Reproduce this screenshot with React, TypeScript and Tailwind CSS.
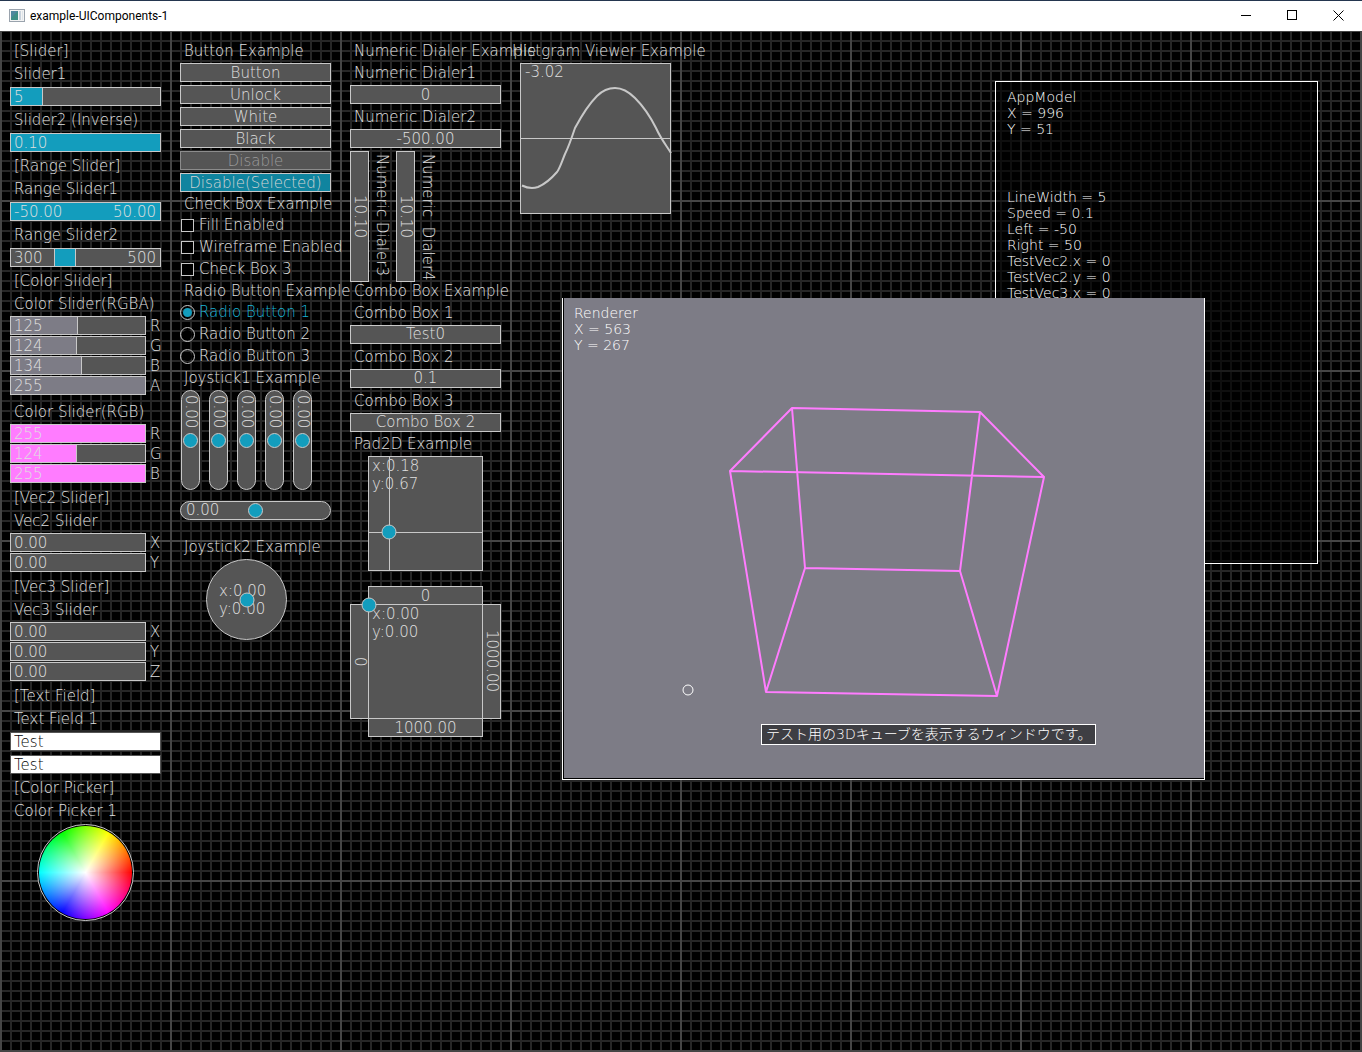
import React, { useId, useState } from "react";
import clsx from "clsx";

const RANGE_BASE =
  "block appearance-none bg-transparent outline-none cursor-pointer [&::-webkit-slider-thumb]:appearance-none";
const BOX = "border border-[#c8c8c8] bg-[#555555] text-[#e0e0e0]";
const KNOB_THUMB =
  "[&::-webkit-slider-thumb]:size-[15px] [&::-webkit-slider-thumb]:rounded-full [&::-webkit-slider-thumb]:border [&::-webkit-slider-thumb]:border-[#c8c8c8] [&::-webkit-slider-thumb]:bg-[#139dbd]";

const Label = ({
  children,
  htmlFor,
  className,
}: {
  children: React.ReactNode;
  htmlFor?: string;
  className?: string;
}) => {
  const Tag = htmlFor ? "label" : "h2";
  return (
    <Tag
      htmlFor={htmlFor}
      className={clsx("h-[19px] pl-1 leading-[21px] whitespace-nowrap", className)}
    >
      {children}
    </Tag>
  );
};

const Section = ({
  children,
  className,
}: {
  children: React.ReactNode;
  className?: string;
}) => <section className={clsx("flex flex-col gap-[3px]", className)}>{children}</section>;

const Slider = ({
  id,
  label,
  min = 0,
  max,
  initial,
  digits = 0,
  inverse = false,
  fill = "#139dbd",
}: {
  id?: string;
  label: string;
  min?: number;
  max: number;
  initial: number;
  digits?: number;
  inverse?: boolean;
  fill?: string;
}) => {
  const [value, setValue] = useState(initial);
  const ratio = (value - min) / (max - min);
  const percent = (inverse ? 1 - ratio : ratio) * 100;

  return (
    <div className={clsx("relative h-[19px] flex-1 leading-[19px]", BOX)}>
      <div
        className={clsx(
          "h-full",
          percent > 0 && percent < 100 && "box-content border-r border-[#c8c8c8]"
        )}
        style={{ width: `${percent}%`, backgroundColor: fill }}
      />
      <span className="absolute inset-y-0 left-[3px] pointer-events-none">
        {value.toFixed(digits)}
      </span>
      <input
        id={id}
        type="range"
        aria-label={label}
        min={min}
        max={max}
        step="any"
        value={value}
        onChange={(e) => setValue(Number(e.target.value))}
        className={clsx(RANGE_BASE, "absolute inset-0 w-full opacity-0")}
      />
    </div>
  );
};

const RangeSlider = ({
  label,
  min,
  max,
  initial,
  digits = 0,
}: {
  label: string;
  min: number;
  max: number;
  initial: [number, number];
  digits?: number;
}) => {
  const [range, setRange] = useState(initial);
  const left = ((range[0] - min) / (max - min)) * 100;
  const width = ((range[1] - range[0]) / (max - min)) * 100;

  return (
    <div className={clsx("relative h-[19px] leading-[19px]", BOX)}>
      <div
        className={clsx("h-full bg-[#139dbd]", width < 100 && "border-x border-[#c8c8c8]")}
        style={{ marginLeft: `${left}%`, width: `${width}%` }}
      />
      <div className="absolute inset-0 flex justify-between pr-1 pl-[3px] pointer-events-none">
        <span>{range[0].toFixed(digits)}</span>
        <span>{range[1].toFixed(digits)}</span>
      </div>
      <input
        type="range"
        aria-label={`${label} lower`}
        min={min}
        max={max}
        value={range[0]}
        onChange={(e) => setRange([Math.min(Number(e.target.value), range[1]), range[1]])}
        className={clsx(RANGE_BASE, "absolute inset-y-0 left-0 w-1/2 opacity-0")}
      />
      <input
        type="range"
        aria-label={`${label} upper`}
        min={min}
        max={max}
        value={range[1]}
        onChange={(e) => setRange([range[0], Math.max(Number(e.target.value), range[0])])}
        className={clsx(RANGE_BASE, "absolute inset-y-0 right-0 w-1/2 opacity-0")}
      />
    </div>
  );
};

interface Channel {
  name: string;
  value: number;
}

const ChannelSliders = ({
  title,
  channels,
  max,
  digits = 0,
  fill,
  className = "pb-px",
}: {
  title: string;
  channels: Channel[];
  max: number;
  digits?: number;
  fill?: string;
  className?: string;
}) => (
  <Section className={className}>
    <Label>{title}</Label>
    <div className="flex flex-col gap-px">
      {channels.map((channel) => (
        <div key={channel.name} className="flex">
          <Slider
            label={`${title} ${channel.name}`}
            max={max}
            initial={channel.value}
            digits={digits}
            fill={fill}
          />
          <span className="h-[19px] w-[15px] pl-1 leading-[21px]">{channel.name}</span>
        </div>
      ))}
    </div>
  </Section>
);

const PushButton = ({
  children,
  disabled,
  selected,
}: {
  children: string;
  disabled?: boolean;
  selected?: boolean;
}) => (
  <button
    type="button"
    disabled={disabled}
    className={clsx(
      "h-[19px] border leading-[19px]",
      selected && "border-[#c8c8c8] bg-[#10849f] text-[#d4d4d4]",
      !selected && disabled && "border-[#8c8c8c] bg-[#555555] text-[#9c9c9c]",
      !selected && !disabled && "border-[#c8c8c8] bg-[#555555]"
    )}
  >
    {children}
  </button>
);

const CheckBox = ({ label }: { label: string }) => (
  <label className="flex h-[19px] items-center gap-[5px] pl-px whitespace-nowrap leading-[19px]">
    <input
      type="checkbox"
      className="size-[13px] shrink-0 appearance-none border border-[#c8c8c8] bg-black checked:bg-[#139dbd]"
    />
    {label}
  </label>
);

const RadioButton = ({ label, checked }: { label: string; checked?: boolean }) => (
  <label className="flex h-[19px] items-center gap-1 whitespace-nowrap leading-[19px] has-checked:text-[#18b4d8]">
    <input
      type="radio"
      name="radio-example"
      defaultChecked={checked}
      className="size-[15px] shrink-0 appearance-none rounded-full border border-[#c8c8c8] bg-black bg-clip-content p-[2px] checked:bg-[#139dbd]"
    />
    {label}
  </label>
);

const NumericDialer = ({
  id,
  label,
  value,
  vertical,
}: {
  id?: string;
  label?: string;
  value: string;
  vertical?: boolean;
}) => (
  <input
    id={id}
    aria-label={label}
    inputMode="decimal"
    defaultValue={value}
    className={clsx(
      BOX,
      "min-w-0 text-center outline-none",
      vertical
        ? "h-full w-[19px] leading-[17px] [writing-mode:vertical-rl]"
        : "h-[19px] w-full leading-[17px]"
    )}
  />
);

const LabeledDialer = ({ label, value }: { label: string; value: string }) => {
  const id = useId();
  return (
    <>
      <Label htmlFor={id}>{label}</Label>
      <NumericDialer id={id} value={value} />
    </>
  );
};

const ComboBox = ({ label, options }: { label: string; options: string[] }) => {
  const id = useId();
  return (
    <>
      <Label htmlFor={id}>{label}</Label>
      <select
        id={id}
        className={clsx(BOX, "h-[19px] appearance-none text-center leading-[17px] outline-none")}
      >
        {options.map((option) => (
          <option key={option}>{option}</option>
        ))}
      </select>
    </>
  );
};

const Knob = ({ className }: { className?: string }) => (
  <span
    className={clsx(
      "absolute size-[15px] -translate-1/2 rounded-full border border-[#c8c8c8] bg-[#139dbd]",
      className
    )}
  />
);

const Histogram = () => (
  <svg
    viewBox="0 0 151 151"
    className="h-[151px] w-[151px] overflow-visible"
    role="img"
    aria-label="Histogram"
  >
    <rect x="0.5" y="0.5" width="150" height="150" fill="#555555" stroke="#c8c8c8" />
    <path d="M1 75.5H150" stroke="#c8c8c8" />
    <path
      d="M2 122.5C6 124.5 12 126 18 124C25 121 31 116 37 109C40 105 42 98 45 91C48 85 52 74 55 65C62 52 70 40 77 33C83 27 89 25 95 25C102 25 109 29 115 35C122 42 130 53 136 65C141 76 146 82 151 90"
      fill="none"
      stroke="#c8c8c8"
      strokeWidth="2"
    />
  </svg>
);

const ColorWheel = () => (
  <div className="flex size-[97px] items-center justify-center self-center rounded-full border border-[#c8c8c8] bg-black">
    <div className="size-[93px] rounded-full bg-[radial-gradient(closest-side,white,transparent),conic-gradient(from_90deg,#f00,#f0f,#00f,#0ff,#0f0,#ff0,#f00)]" />
  </div>
);

const TitleBar = () => (
  <header className="flex h-[31px] items-center border-t border-[#24364f] bg-white pr-px pb-px text-black">
    <svg width="16" height="14" viewBox="0 0 16 14" className="ml-[9px]">
      <rect x="0.5" y="0.5" width="15" height="12" fill="#f4f4f4" stroke="#9aa3ad" />
      <rect x="2" y="2" width="7" height="9" fill="#3f8f86" />
      <path d="M2 2h7L2 9z" fill="#5b84b0" opacity="0.6" />
      <rect x="10" y="2" width="2" height="9" fill="#c9d3dd" />
      <rect x="13" y="2" width="1" height="9" fill="#dfe5ea" />
    </svg>
    <h1 className="ml-[5px] flex-1 font-[Roboto,'Noto_Sans',sans-serif] text-xs font-normal">
      example-UIComponents-1
    </h1>
    <button type="button" aria-label="Minimize" className="flex h-full w-[46px] items-center justify-center">
      <svg width="11" height="11" stroke="black">
        <path d="M0 5.5H10" />
      </svg>
    </button>
    <button type="button" aria-label="Maximize" className="flex h-full w-[46px] items-center justify-center">
      <svg width="11" height="11" stroke="black" fill="none">
        <rect x="0.5" y="0.5" width="9" height="9" />
      </svg>
    </button>
    <button type="button" aria-label="Close" className="flex h-full w-[46px] items-center justify-center">
      <svg width="11" height="11" stroke="black">
        <path d="M0.5 0.5L10.5 10.5M10.5 0.5L0.5 10.5" />
      </svg>
    </button>
  </header>
);

const SliderColumn = () => {
  const slider1 = useId();
  const slider2 = useId();
  const textField = useId();

  return (
    <div className="flex w-[151px] flex-col gap-1">
      <Label>[Slider]</Label>
      <Label htmlFor={slider1}>Slider1</Label>
      <div className="flex">
        <Slider id={slider1} label="Slider1" max={24} initial={5} />
      </div>
      <Label htmlFor={slider2}>Slider2 (Inverse)</Label>
      <div className="flex">
        <Slider id={slider2} label="Slider2 (Inverse)" min={0.1} max={10} initial={0.1} digits={2} inverse />
      </div>
      <Label>[Range Slider]</Label>
      <Label>Range Slider1</Label>
      <RangeSlider label="Range Slider1" min={-50} max={50} initial={[-50, 50]} digits={2} />
      <Label>Range Slider2</Label>
      <RangeSlider label="Range Slider2" min={-80} max={1250} initial={[300, 500]} />
      <Label>[Color Slider]</Label>
      <ChannelSliders
        title="Color Slider(RGBA)"
        className="pb-[3px]"
        max={255}
        fill="#7d7c86"
        channels={[
          { name: "R", value: 125 },
          { name: "G", value: 124 },
          { name: "B", value: 134 },
          { name: "A", value: 255 },
        ]}
      />
      <ChannelSliders
        title="Color Slider(RGB)"
        max={255}
        fill="#ff7cff"
        channels={[
          { name: "R", value: 255 },
          { name: "G", value: 124 },
          { name: "B", value: 255 },
        ]}
      />
      <Label>[Vec2 Slider]</Label>
      <ChannelSliders
        title="Vec2 Slider"
        max={1}
        digits={2}
        channels={[
          { name: "X", value: 0 },
          { name: "Y", value: 0 },
        ]}
      />
      <Label>[Vec3 Slider]</Label>
      <ChannelSliders
        title="Vec3 Slider"
        max={1}
        digits={2}
        channels={[
          { name: "X", value: 0 },
          { name: "Y", value: 0 },
          { name: "Z", value: 0 },
        ]}
      />
      <Label>[Text Field]</Label>
      <Label htmlFor={textField}>Text Field 1</Label>
      <input
        id={textField}
        defaultValue="Test"
        className="h-[19px] border border-[#555555] bg-white pl-[3px] leading-[17px] text-black outline-none"
      />
      <input
        aria-label="Text Field 2"
        defaultValue="Test"
        className="h-[19px] border border-[#555555] bg-white pl-[3px] leading-[17px] text-black outline-none"
      />
      <Label>[Color Picker]</Label>
      <Label>Color Picker 1</Label>
      <ColorWheel />
    </div>
  );
};

const ButtonColumn = () => (
  <div className="flex w-[151px] flex-col gap-[2px]">
    <Section>
      <Label>Button Example</Label>
      <PushButton>Button</PushButton>
      <PushButton>Unlock</PushButton>
      <PushButton>White</PushButton>
      <PushButton>Black</PushButton>
      <PushButton disabled>Disable</PushButton>
      <PushButton disabled selected>
        Disable(Selected)
      </PushButton>
    </Section>
    <Section>
      <Label>Check Box Example</Label>
      <CheckBox label="Fill Enabled" />
      <CheckBox label="Wireframe Enabled" />
      <CheckBox label="Check Box 3" />
    </Section>
    <Section>
      <Label>Radio Button Example</Label>
      <RadioButton label="Radio Button 1" checked />
      <RadioButton label="Radio Button 2" />
      <RadioButton label="Radio Button 3" />
    </Section>
    <Section>
      <Label>Joystick1 Example</Label>
      <div className="flex gap-[9px] pl-px">
        {[1, 2, 3, 4, 5].map((n) => (
          <div key={n} className={clsx("relative h-[100px] w-[19px] rounded-full", BOX)}>
            <span className="absolute inset-x-0 top-1 leading-[17px] [writing-mode:vertical-rl]">
              0.00
            </span>
            <input
              type="range"
              aria-label={`Joystick1 axis ${n}`}
              min={-1}
              max={1}
              step="any"
              defaultValue={0}
              className={clsx(
                RANGE_BASE,
                KNOB_THUMB,
                "absolute inset-0 h-full w-[17px] [writing-mode:vertical-lr]"
              )}
            />
          </div>
        ))}
      </div>
      <div className={clsx("relative mt-2 h-[19px] rounded-full leading-[17px]", BOX)}>
        <span className="absolute left-[5px]">0.00</span>
        <input
          type="range"
          aria-label="Joystick1 horizontal"
          min={-1}
          max={1}
          step="any"
          defaultValue={0}
          className={clsx(RANGE_BASE, KNOB_THUMB, "absolute inset-0 h-[17px] w-full")}
        />
      </div>
    </Section>
    <Section className="pt-[15px]">
      <Label>Joystick2 Example</Label>
      <div
        className={clsx(
          "relative ml-[26px] flex size-[81px] flex-col justify-center rounded-full pl-3 leading-[18px]",
          BOX
        )}
      >
        <span>x:0.00</span>
        <span>y:0.00</span>
        <Knob className="top-1/2 left-1/2" />
      </div>
    </Section>
  </div>
);

const DialerColumn = () => (
  <div className="flex w-[151px] flex-col gap-[2px]">
    <Section className="-mb-[3px]">
      <Label>Numeric Dialer Example</Label>
      <LabeledDialer label="Numeric Dialer1" value="0" />
      <LabeledDialer label="Numeric Dialer2" value="-500.00" />
      <div className="flex h-[131px]">
        <NumericDialer label="Numeric Dialer3" value="10.10" vertical />
        <span className="mr-[5px] ml-[3px] w-[19px] pt-[3px] leading-[19px] whitespace-pre [writing-mode:vertical-rl]">
          Numeric Dialer3
        </span>
        <NumericDialer label="Numeric Dialer4" value="10.10" vertical />
        <span className="ml-[3px] w-[19px] pt-[3px] leading-[19px] whitespace-pre [writing-mode:vertical-rl]">
          {"Numeric  Dialer4"}
        </span>
      </div>
    </Section>
    <Section>
      <Label>Combo Box Example</Label>
      <ComboBox label="Combo Box 1" options={["Test0", "Test1", "Test2"]} />
      <ComboBox label="Combo Box 2" options={["0.1", "0.2", "0.3"]} />
      <ComboBox label="Combo Box 3" options={["Combo Box 2", "Combo Box 1"]} />
    </Section>
    <Section>
      <Label>Pad2D Example</Label>
      <div className={clsx("relative size-[115px] self-center pl-[3px] leading-[18px]", BOX)}>
        <p>x:0.18</p>
        <p>y:0.67</p>
        <div className="absolute inset-y-0 left-[18%] w-px bg-[#c8c8c8]" />
        <div className="absolute inset-x-0 top-[66%] h-px bg-[#c8c8c8]" />
        <Knob className="top-[66%] left-[18%]" />
      </div>
      <div className="mt-3 grid grid-cols-[18px_115px_18px] grid-rows-[18px_115px_18px] leading-[18px]">
        <div className="col-start-2 -mb-px grid">
          <NumericDialer label="Pad top" value="0" />
        </div>
        <div className="col-start-1 row-start-2 -mr-px grid">
          <NumericDialer label="Pad left" value="0" vertical />
        </div>
        <div className={clsx("relative col-start-2 row-start-2 pl-[3px]", BOX)}>
          <p>x:0.00</p>
          <p>y:0.00</p>
          <Knob className="top-0 left-0" />
        </div>
        <div className="col-start-3 row-start-2 -ml-px grid">
          <NumericDialer label="Pad right" value="1000.00" vertical />
        </div>
        <div className="col-start-2 row-start-3 -mt-px grid">
          <NumericDialer label="Pad bottom" value="1000.00" />
        </div>
      </div>
    </Section>
  </div>
);

const HistogramColumn = () => (
  <div className="flex w-[151px] flex-col gap-[3px]">
    <Label className="-ml-3">Histgram Viewer Example</Label>
    <div className="relative">
      <Histogram />
      <span className="absolute top-0 left-[5px] leading-[19px]">-3.02</span>
    </div>
  </div>
);

const MODEL_STATE = [
  "LineWidth = 5",
  "Speed = 0.1",
  "Left = -50",
  "Right = 50",
  "TestVec2.x = 0",
  "TestVec2.y = 0",
  "TestVec3.x = 0",
];

const AppModelWindow = () => (
  <section className="absolute top-[50px] left-[995px] h-[483px] w-[323px] border border-white bg-black/60 py-[7px] pl-[11px] text-sm leading-4 text-white">
    <h2>AppModel</h2>
    <p>X = 996</p>
    <p>Y = 51</p>
    <div className="mt-[52px]">
      {MODEL_STATE.map((line) => (
        <p key={line}>{line}</p>
      ))}
    </div>
  </section>
);

const RendererWindow = () => (
  <section className="absolute top-[267px] left-[562px] h-[482px] w-[643px] border border-t-0 border-white bg-black text-sm leading-4 text-white">
    <div className="relative ml-px h-[480px] bg-[#7d7c86] pt-[7px] pl-[10px]">
      <h2>Renderer</h2>
      <p>X = 563</p>
      <p>Y = 267</p>
      <svg
        viewBox="564 298 640 480"
        className="absolute inset-0 size-full"
        fill="none"
        role="img"
        aria-label="Wireframe cube"
      >
        <path
          d="M792 408L980 412L1044 477L730 471ZM792 408L805 568L960 571L980 412M805 568L766 692L997 696L960 571M730 471L766 692M1044 477L997 696"
          stroke="#ff7cff"
          strokeWidth="2"
          strokeLinejoin="round"
        />
        <circle cx="688" cy="690" r="5" stroke="white" />
      </svg>
      <div
        role="tooltip"
        className="absolute top-[426px] left-[197px] h-[21px] w-[335px] border border-white bg-[#3e3e43] pl-1 font-['DejaVu_Sans','Noto_Sans_CJK_JP',sans-serif] leading-[19px] font-extralight whitespace-nowrap"
      >
        テスト用の3Dキューブを表示するウィンドウです。
      </div>
    </div>
  </section>
);

export default function App() {
  return (
    <div className="flex min-h-screen flex-col bg-black font-['DejaVu_Sans',sans-serif] text-[15px] font-extralight text-[#e0e0e0]">
      <TitleBar />
      <main className="relative flex-1 overflow-hidden bg-[linear-gradient(90deg,#454545_2px,transparent_2px),linear-gradient(#454545_2px,transparent_2px),linear-gradient(90deg,#262626_2px,transparent_2px),linear-gradient(#262626_2px,transparent_2px)] bg-[size:170px_170px,170px_170px,10px_10px,10px_10px] bg-[position:0_-1px]">
        <div className="flex items-start gap-[19px] p-[10px]">
          <SliderColumn />
          <ButtonColumn />
          <DialerColumn />
          <HistogramColumn />
        </div>
        <AppModelWindow />
        <RendererWindow />
      </main>
    </div>
  );
}
